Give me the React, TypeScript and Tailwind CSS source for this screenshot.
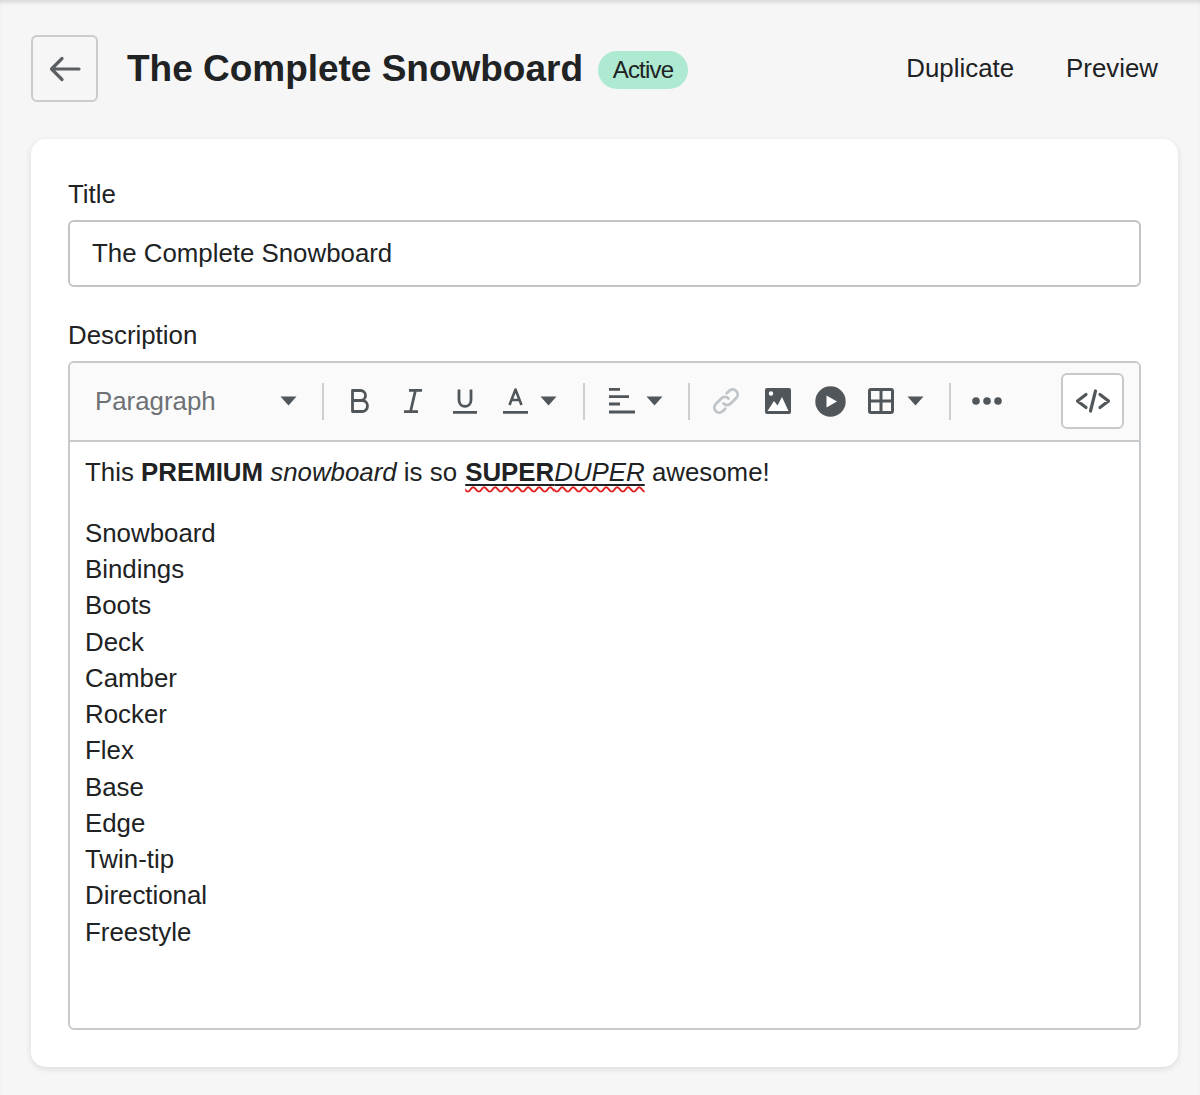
import React from "react";

const Caret = () => (
  <svg width="17" height="10" viewBox="0 0 17 10" className="shrink-0"><path d="M0.5 0.5h16L8.500 9.500z" fill="#50565a" /></svg>
);
const Sep = ({ ml, mr }: { ml: string; mr: string }) => (
  <div className={`w-[2px] h-[37px] bg-[#cdd0d3] shrink-0 ${ml} ${mr}`} />
);
const Icon = ({ children, muted, w }: { children: React.ReactNode; muted?: boolean; w?: string }) => (
  <div className={`${w ?? "w-[52px]"} h-[52px] flex items-center justify-center shrink-0`}>
    <svg width="30" height="30" viewBox="0 0 30 30" fill="none" stroke={muted ? "#bfc5c8" : "#50565a"} strokeWidth="2.800" strokeLinejoin="round">
      {children}
    </svg>
  </div>
);

const items = ["Snowboard","Bindings","Boots","Deck","Camber","Rocker","Flex","Base","Edge","Twin-tip","Directional","Freestyle"];

export default function App() {
  return (
    <div className="min-h-[1095px] bg-[#f6f6f7] pt-[35px] pl-[31px] pr-[22px] pb-[28px] text-[#202223] text-[25.85px] leading-[36.27px] font-['Liberation_Sans',sans-serif] shadow-[inset_0_5px_5px_-3px_rgba(0,0,0,0.14)]">
      <div className="flex items-center h-[67px]">
        <button className="w-[67px] h-[67px] border-2 border-[#c9cccf] rounded-[6px] flex items-center justify-center shrink-0">
          <svg width="32" height="32" viewBox="0 0 32 32" fill="none" stroke="#5c5f62" strokeWidth="3.200" strokeLinecap="round" strokeLinejoin="round">
            <path d="M2.500 16H30M13 5.500 2.500 16 13 26.500" />
          </svg>
        </button>
        <h1 className="ml-[29px] text-[36.97px] leading-[50px] font-bold text-[#202223]">The Complete Snowboard</h1>
        <span className="ml-[15px] mt-[2px] pt-[2px] h-[38px] w-[90px] rounded-full bg-[#aee9d1] flex items-center justify-center text-[#202223] text-[24px] tracking-[-0.8px]">Active</span>
        <span className="ml-auto">Duplicate</span>
        <span className="ml-[52px] mr-[20px]">Preview</span>
      </div>
      <div className="mt-[37px] bg-white rounded-[15px] shadow-[0_2px_6px_rgba(23,24,24,0.12)] px-[37px] pt-[37px] pb-[37px]">
        <div className="mb-[8px]">Title</div>
        <div className="h-[67px] border-2 border-[#c0c4c7] rounded-[6px] flex items-center pl-[22px] pb-[2px]">The Complete Snowboard</div>
        <div className="mt-[30px] mb-[7px]">Description</div>
        <div className="h-[669px] border-2 border-[#c6cacd] rounded-[6px] flex flex-col overflow-hidden">
          <div className="h-[79px] shrink-0 bg-[#fafafa] border-b-2 border-[#c6cacd] flex items-center">
            <div className="pl-[25px] w-[252px] shrink-0 flex items-center justify-between pr-[25px] text-[#6d7175]">
              <span>Paragraph</span>
              <Caret />
            </div>
            <Sep ml="" mr="mr-[10px]" />
            <Icon><path d="M7.500 4.500h8a5 5 0 0 1 0 10h-8zM7.500 14.500h9.500a5.500 5.500 0 0 1 0 11h-9.500z" /></Icon>
            <Icon><path d="M12 4.300h13M7 25.700h14M18.500 4.300 13.500 25.700" /></Icon>
            <Icon w="w-[51px]"><path d="M10 3.500v10.500c0 8.500 12 8.500 12 0V3.500M4 26.300h24" /></Icon>
            <div className="w-[51px] flex justify-center shrink-0">
              <svg width="30" height="30" viewBox="0 0 30 30" fill="none" stroke="#50565a" strokeWidth="2.600" strokeLinejoin="round"><path d="M9.500 19 15.500 3.500 21.500 19M11.500 14h8" /><path d="M3 26.300h25" strokeWidth="2.800" /></svg>
            </div>
            <Caret />
            <Sep ml="ml-[26px]" mr="mr-[10px]" />
            <Icon><path d="M3 3.300h11M3 10.700h20M3 18h11M3 26h26" /></Icon>
            <div className="-ml-[1px]"><Caret /></div>
            <Sep ml="ml-[25px]" mr="mr-[10px]" />
            <Icon muted>
              <path d="M12.500 17.500a5 5 0 0 0 7.200 0l5.500-5.500a5 5 0 0 0-7.100-7.100l-2.400 2.400M17.500 12.500a5 5 0 0 0-7.200 0l-5.500 5.500a5 5 0 0 0 7.100 7.100l2.400-2.400" strokeLinecap="round" />
            </Icon>
            <div className="w-[52px] flex justify-center shrink-0">
              <svg width="28" height="28" viewBox="0 0 28 28"><rect width="26" height="26" x="1" y="1" rx="2" fill="#50565a" /><circle cx="7" cy="6.500" r="2.200" fill="#fff" /><path d="M3.500 24 10 14l3.500 4.500L18 10l6.500 14z" fill="#fff" /></svg>
            </div>
            <div className="w-[52px] flex justify-center shrink-0">
              <svg width="31" height="31" viewBox="0 0 31 31"><circle cx="15.500" cy="15.500" r="15.200" fill="#50565a" /><path d="M11.500 9.500v12l10.500-6z" fill="#fff" /></svg>
            </div>
            <div className="w-[50px] flex justify-center shrink-0">
              <svg width="26" height="26" viewBox="0 0 26 26" fill="none" stroke="#50565a" strokeWidth="3" strokeLinejoin="round"><rect x="1.500" y="1.500" width="23" height="23" rx="1.500" /><path d="M13 1.500v23M1.500 13h23" /></svg>
            </div>
            <div className="ml-[1px]"><Caret /></div>
            <Sep ml="ml-[25px]" mr="mr-[10px]" />
            <Icon><g fill="#50565a" stroke="none"><circle cx="4" cy="15" r="3.800" /><circle cx="15" cy="15" r="3.800" /><circle cx="26" cy="15" r="3.800" /></g></Icon>
            <button className="ml-auto mr-[15px] w-[63px] h-[56px] bg-white border-2 border-[#c6cacd] rounded-[6px] flex items-center justify-center">
              <svg width="36" height="24" viewBox="0 0 36 24" fill="none" stroke="#50565a" strokeWidth="3.200" strokeLinecap="round" strokeLinejoin="round"><path d="M11 5.500 2.500 12l8.500 6.500M25 5.500 33.500 12 25 18.500M20.500 2 15.500 22" /></svg>
            </button>
          </div>
          <div className="pl-[15px] pt-[12px] flex-1 min-h-0">
            <p className="mb-[25px]">
              This <b>PREMIUM</b> <i>snowboard</i> is so{" "}
              <span className="ml-[1px] underline decoration-[#202223] decoration-2 underline-offset-[3px]">
                <span className="underline decoration-wavy decoration-[#e02020] decoration-[1.600px] underline-offset-[5px]">
                  <b>SUPER</b><i>DUPER</i>
                </span>
              </span>{" "}
              awesome!
            </p>
            {items.map((t) => <div key={t}>{t}</div>)}
          </div>
        </div>
      </div>
    </div>
  );
}
